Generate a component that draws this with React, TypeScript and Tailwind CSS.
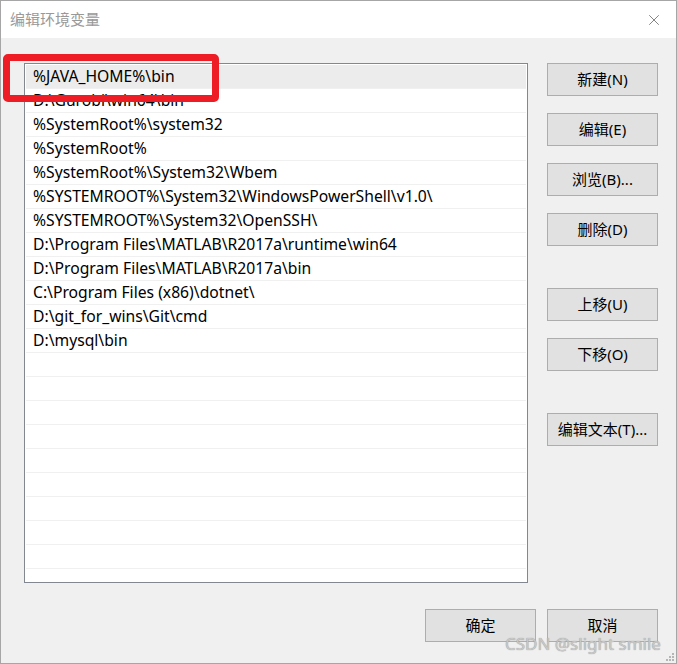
import { X } from "lucide-react";

const paths = [
  "%JAVA_HOME%\\bin",
  "D:\\Gurobi\\win64\\bin",
  "%SystemRoot%\\system32",
  "%SystemRoot%",
  "%SystemRoot%\\System32\\Wbem",
  "%SYSTEMROOT%\\System32\\WindowsPowerShell\\v1.0\\",
  "%SYSTEMROOT%\\System32\\OpenSSH\\",
  "D:\\Program Files\\MATLAB\\R2017a\\runtime\\win64",
  "D:\\Program Files\\MATLAB\\R2017a\\bin",
  "C:\\Program Files (x86)\\dotnet\\",
  "D:\\git_for_wins\\Git\\cmd",
  "D:\\mysql\\bin",
];

const rows = [...paths, ...Array(9).fill("")];

function Btn({ label, className = "" }: { label: string; className?: string }) {
  return (
    <button className={"h-[33px] w-[111px] border border-[#adadad] bg-[#e1e1e1] text-[15px] text-black " + className}>
      {label}
    </button>
  );
}

export default function App() {
  return (
    <div
      className="relative h-[664px] w-[677px] overflow-hidden border border-[#a6a6a6] bg-[#f0f0f0]"
      style={{ fontFamily: '"Noto Sans", "Noto Sans CJK SC", sans-serif' }}
    >
      <div className="flex h-[37px] items-center justify-between bg-white pl-[9px] pr-[13px]">
        <span className="text-[15px] text-[#999]">编辑环境变量</span>
        <X className="h-[18px] w-[18px] text-[#777]" strokeWidth={1.2} />
      </div>

      <div className="flex pl-[23px] pt-[25px]">
        <div className="h-[520px] w-[504px] border border-[#828790] bg-white px-px pt-px">
          {rows.map((p, i) => (
            <div
              key={i}
              className={
                "flex h-[24px] items-center border-b border-[#f0f0f0] pl-[7px] pt-px text-[15.7px] leading-none text-black " +
                (i === 0 ? "bg-[#ececec]" : "")
              }
            >
              {p}
            </div>
          ))}
        </div>

        <div className="ml-[19px] flex flex-col">
          <Btn label="新建(N)" />
          <Btn label="编辑(E)" className="mt-[17px]" />
          <Btn label="浏览(B)..." className="mt-[17px]" />
          <Btn label="删除(D)" className="mt-[17px]" />
          <Btn label="上移(U)" className="mt-[42px]" />
          <Btn label="下移(O)" className="mt-[17px]" />
          <Btn label="编辑文本(T)..." className="mt-[42px]" />
        </div>
      </div>

      <div className="mt-[26px] flex justify-end gap-[11px] pr-[18px]">
        <Btn label="确定" />
        <Btn label="取消" />
      </div>

      <div className="pointer-events-none absolute left-[2px] top-[53px] h-[48px] w-[216px] rounded-[5px] border-[7px] border-[#ee1c25]" />

      <div
        className="pointer-events-none absolute left-[504px] top-[634px] text-[17px] leading-none text-[#c8c8c8]"
        style={{ textShadow: "0 0 1px #888" }}
      >
        CSDN @slight smile
      </div>

      <div className="absolute bottom-[2px] right-[2px] grid grid-cols-3 gap-px">
        {[0, 0, 1, 0, 1, 1, 1, 1, 1].map((v, i) => (
          <span key={i} className={"h-[2px] w-[2px] " + (v ? "bg-[#b5b5b5]" : "")} />
        ))}
      </div>
    </div>
  );
}
